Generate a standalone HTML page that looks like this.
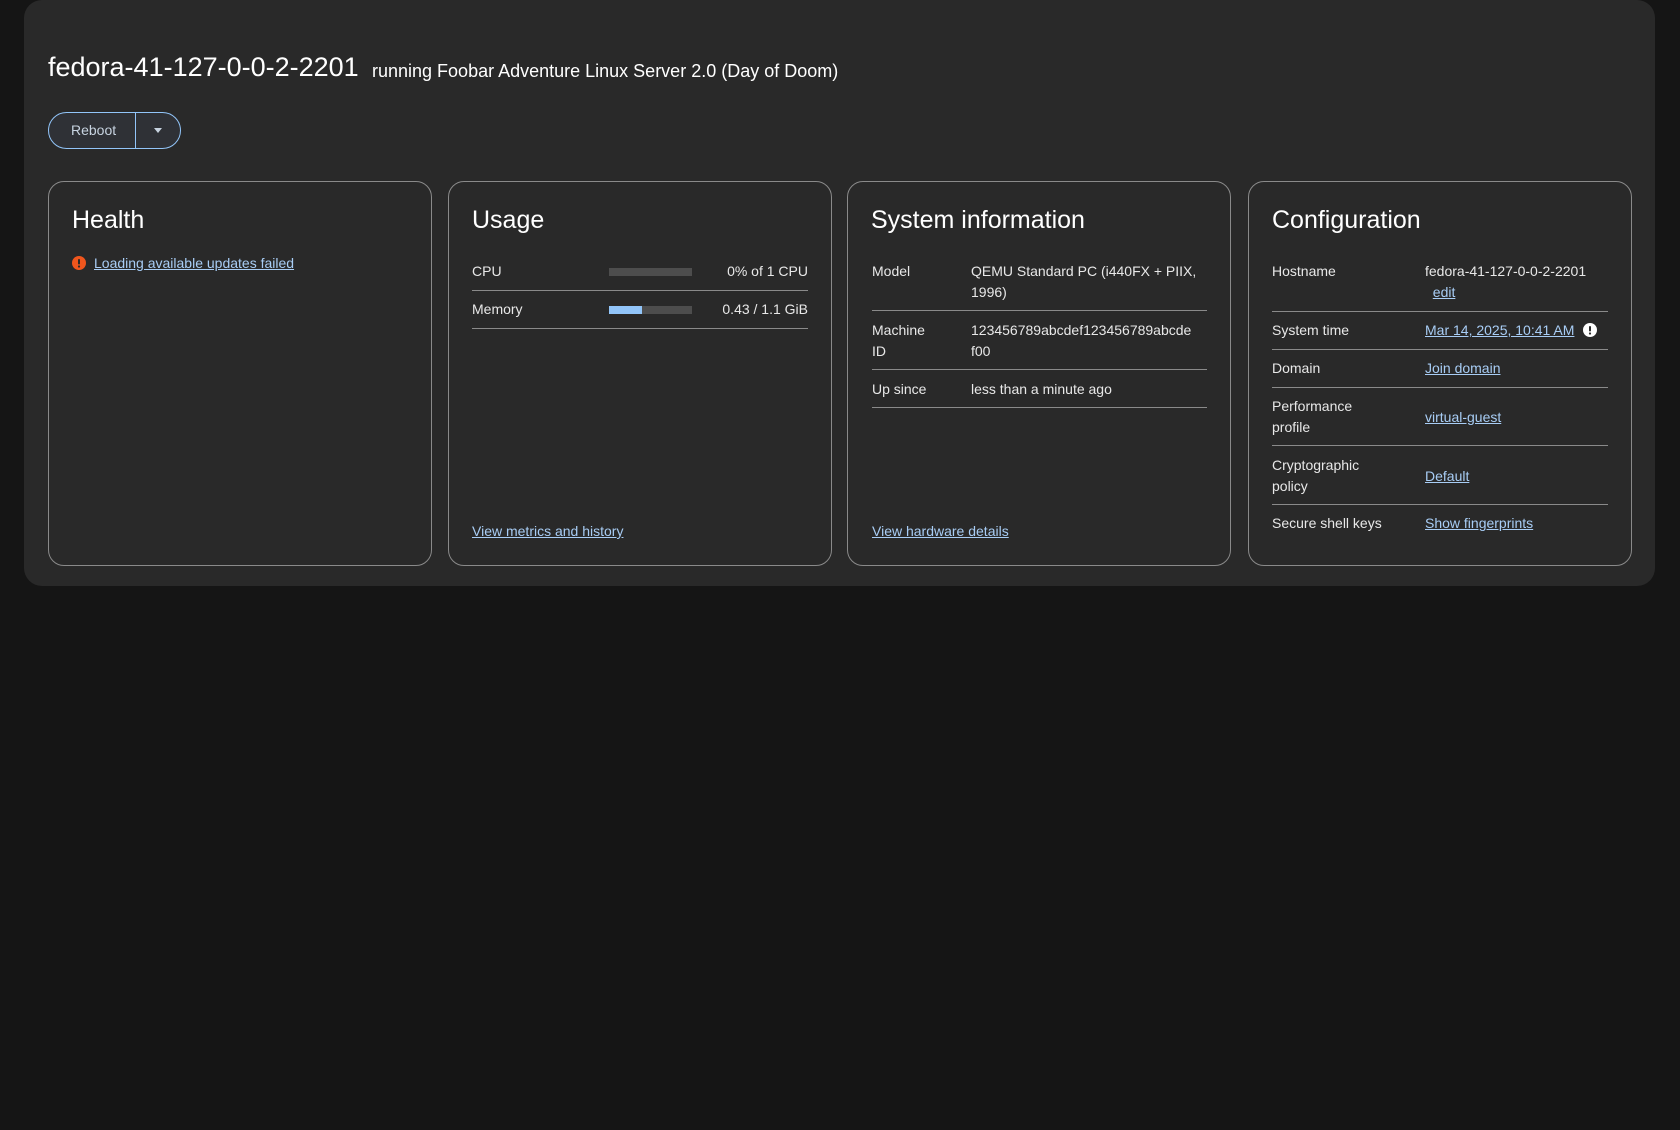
<!DOCTYPE html>
<html><head><meta charset="utf-8"><style>
*{box-sizing:border-box;margin:0;padding:0}
body{width:1680px;height:1130px;background:#151515;font-family:"Liberation Sans",sans-serif;color:#e0e0e0;position:relative;overflow:hidden}
.panel{position:absolute;left:24px;top:0;width:1631px;height:586px;background:#292929;border-radius:18px}
.abs{position:absolute;white-space:nowrap}
h1{position:absolute;left:48px;top:52px;font-size:27px;font-weight:400;color:#fff}
.sub{position:absolute;left:372px;top:61px;font-size:18px;color:#fff}
.btn{position:absolute;left:48px;top:112px;width:133px;height:37px;border:1px solid #92c5f9;border-radius:19px;background:#2f3136}
.btn .t{position:absolute;left:22px;top:9px;font-size:14px;color:#c7d3e0}
.btn .d{position:absolute;left:86px;top:0;width:1px;height:35px;background:#92c5f9}
.btn .c{position:absolute;left:105px;top:15px;width:0;height:0;border-left:4.5px solid transparent;border-right:4.5px solid transparent;border-top:5px solid #c7d3e0}
.card{position:absolute;top:181px;width:384px;height:385px;border:1px solid #8a8a8a;border-radius:16px}
.card h2{position:absolute;left:23px;top:24px;font-size:25px;font-weight:400;color:#fff}
.line{position:absolute;height:1px;background:#8a8a8a}
.lb,.v{position:absolute;font-size:14px;line-height:21px;color:#e8e8e8}
a{color:#a8cdf5;text-decoration:underline}
</style></head><body>
<div class="panel"></div>
<h1>fedora-41-127-0-0-2-2201</h1>
<div class="sub">running Foobar Adventure Linux Server 2.0 (Day of Doom)</div>
<div class="btn"><span class="t">Reboot</span><span class="d"></span><span class="c"></span></div>

<div class="card" style="left:48px"><h2>Health</h2>
<svg style="position:absolute;left:23px;top:74px" width="14" height="14" viewBox="0 0 14 14"><circle cx="7" cy="7" r="7" fill="#f0561d"/><rect x="6" y="3" width="2" height="5.5" rx="1" fill="#292929"/><circle cx="7" cy="10.5" r="1.1" fill="#292929"/></svg>
<a class="abs" style="left:45px;top:73px;font-size:14px">Loading available updates failed</a>
</div>

<div class="card" style="left:448px"><h2>Usage</h2>
<div class="lb" style="left:23px;top:79px">CPU</div>
<div style="position:absolute;left:160px;top:86px;width:83px;height:8px;background:#4d4d4d"></div>
<div class="v" style="right:23px;top:79px">0% of 1 CPU</div>
<div class="line" style="left:23px;right:23px;top:108px"></div>
<div class="lb" style="left:23px;top:117px">Memory</div>
<div style="position:absolute;left:160px;top:124px;width:83px;height:8px;background:#4d4d4d"><div style="width:33px;height:8px;background:#92c5f9"></div></div>
<div class="v" style="right:23px;top:117px">0.43 / 1.1 GiB</div>
<div class="line" style="left:23px;right:23px;top:146px"></div>
<a class="abs" style="left:23px;top:341px;font-size:14px">View metrics and history</a>
</div>

<div class="card" style="left:847px"><h2>System information</h2>
<div class="lb" style="left:24px;top:79px">Model</div>
<div class="v" style="left:123px;top:79px;width:240px">QEMU Standard PC (i440FX + PIIX, 1996)</div>
<div class="line" style="left:24px;right:23px;top:128px"></div>
<div class="lb" style="left:24px;top:138px">Machine<br>ID</div>
<div class="v" style="left:123px;top:138px;width:224px;word-break:break-all">123456789abcdef123456789abcdef00</div>
<div class="line" style="left:24px;right:23px;top:187px"></div>
<div class="lb" style="left:24px;top:197px">Up since</div>
<div class="v" style="left:123px;top:197px">less than a minute ago</div>
<div class="line" style="left:24px;right:23px;top:225px"></div>
<a class="abs" style="left:24px;top:341px;font-size:14px">View hardware details</a>
</div>

<div class="card" style="left:1248px"><h2>Configuration</h2>
<div class="lb" style="left:23px;top:79px">Hostname</div>
<div class="v" style="left:176px;top:79px">fedora-41-127-0-0-2-2201<br>&nbsp;&nbsp;<a>edit</a></div>
<div class="line" style="left:23px;right:23px;top:129px"></div>
<div class="lb" style="left:23px;top:138px">System time</div>
<div class="v" style="left:176px;top:138px;white-space:nowrap"><a>Mar 14, 2025, 10:41 AM</a><svg style="margin-left:9px;vertical-align:-2px" width="14" height="14" viewBox="0 0 14 14"><circle cx="7" cy="7" r="7" fill="#fff"/><rect x="6" y="3" width="2" height="5.5" rx="1" fill="#292929"/><circle cx="7" cy="10.5" r="1.1" fill="#292929"/></svg></div>
<div class="line" style="left:23px;right:23px;top:167px"></div>
<div class="lb" style="left:23px;top:176px">Domain</div>
<div class="v" style="left:176px;top:176px"><a>Join domain</a></div>
<div class="line" style="left:23px;right:23px;top:205px"></div>
<div class="lb" style="left:23px;top:214px">Performance<br>profile</div>
<div class="v" style="left:176px;top:225px"><a>virtual-guest</a></div>
<div class="line" style="left:23px;right:23px;top:263px"></div>
<div class="lb" style="left:23px;top:273px">Cryptographic<br>policy</div>
<div class="v" style="left:176px;top:284px"><a>Default</a></div>
<div class="line" style="left:23px;right:23px;top:322px"></div>
<div class="lb" style="left:23px;top:331px">Secure shell keys</div>
<div class="v" style="left:176px;top:331px"><a>Show fingerprints</a></div>
</div>
</body></html>
